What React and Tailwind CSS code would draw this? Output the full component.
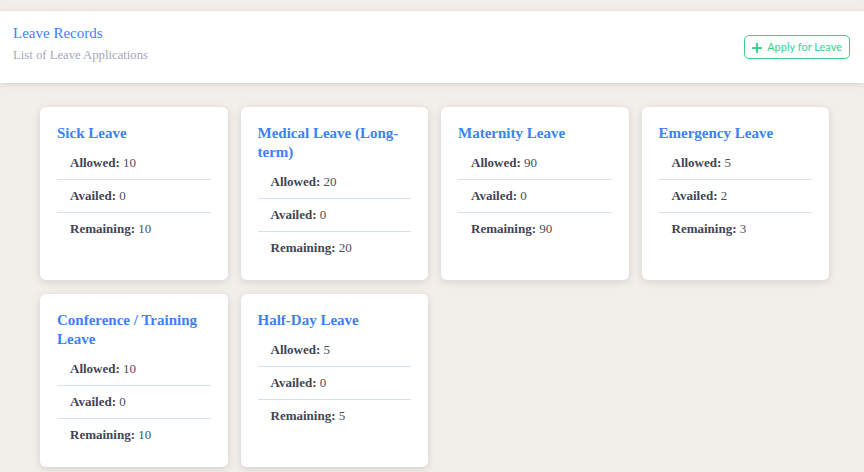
const leaves = [
  { name: "Sick Leave", allowed: 10, availed: 0, remaining: 10 },
  { name: "Medical Leave (Long-term)", allowed: 20, availed: 0, remaining: 20 },
  { name: "Maternity Leave", allowed: 90, availed: 0, remaining: 90 },
  { name: "Emergency Leave", allowed: 5, availed: 2, remaining: 3 },
  { name: "Conference / Training Leave", allowed: 10, availed: 0, remaining: 10 },
  { name: "Half-Day Leave", allowed: 5, availed: 0, remaining: 5 },
];

function LeaveCard({ leave }) {
  const rows = [
    ["Allowed", leave.allowed],
    ["Availed", leave.availed],
    ["Remaining", leave.remaining],
  ];
  return (
    <div className="bg-white rounded-md shadow-[0_2px_8px_rgba(0,0,0,0.12)] pt-[17px] px-[17px] pb-[16px]">
      <h3 className="text-[15px] leading-[19px] font-bold text-[#3b82f6] pr-2">{leave.name}</h3>
      <ul className="mt-[4px]">
        {rows.map(([label, value], i) => (
          <li
            key={label}
            className={`px-[13px] py-[8px] text-[13px] leading-[16px] text-[#4a4f5c] ${
              i < rows.length - 1 ? "border-b border-[#d8e2ee]" : ""
            }`}
          >
            <span className="font-bold text-[#3f4656]">{label}:</span> {value}
          </li>
        ))}
      </ul>
    </div>
  );
}

export default function App() {
  return (
    <div
      className="min-h-[472px] bg-[#f2eeea] pt-[11px] pb-6"
      style={{ fontFamily: '"Liberation Serif", "Times New Roman", serif' }}
    >
      <div className="bg-white shadow-[0_1px_6px_rgba(0,0,0,0.12)] h-[72px] pl-[13px] pr-[14px] flex justify-between">
        <div className="pt-[12px]">
          <h1 className="text-[15px] leading-[20px] text-[#3b82f6]">Leave Records</h1>
          <p className="text-[12.7px] leading-[16px] mt-[4px] text-[#a3a8b8]">List of Leave Applications</p>
        </div>
        <button
          className="self-center h-[24px] px-[7px] flex items-center gap-[5px] rounded-[5px] border border-[#3ccf8e] text-[#3ccf8e] text-[11px] bg-white"
          style={{ fontFamily: "Lato, sans-serif" }}
        >
          <svg width="10" height="10" viewBox="0 0 10 10" className="mt-[1px]">
            <path d="M5 1v8M1 5h8" stroke="#3ccf8e" strokeWidth="2.2" strokeLinecap="round" />
          </svg>
          Apply for Leave
        </button>
      </div>

      <div className="ml-[40px] w-[789px] mt-[24px] grid grid-cols-4 gap-x-[13px] gap-y-[14px]">
        {leaves.map((l) => (
          <LeaveCard key={l.name} leave={l} />
        ))}
      </div>
    </div>
  );
}
